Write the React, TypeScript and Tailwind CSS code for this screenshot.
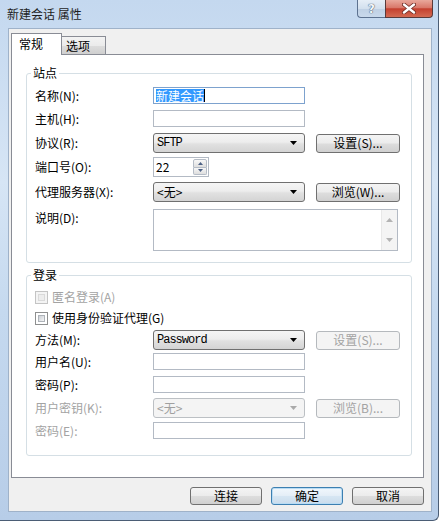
import React from 'react';

const DownArrow: React.FC<{ color?: string }> = ({ color = '#000' }) => (
  <svg width="7" height="4" viewBox="0 0 7 4" className="ml-auto shrink-0">
    <polygon points="0,0 7,0 3.5,4" fill={color} />
  </svg>
);

const TextBox: React.FC<{ focused?: boolean; children?: React.ReactNode }> = ({ focused, children }) => (
  <div
    className={`w-[152px] h-[17px] bg-white flex items-center pl-[2px] border ${
      focused ? 'border-[#7da2ce]' : 'border-[#b3bac4]'
    }`}
  >
    {children}
  </div>
);

const Combo: React.FC<{ value: string; mono?: boolean; disabled?: boolean }> = ({ value, mono, disabled }) => (
  <div
    className={`w-[152px] h-[20px] rounded-[3px] border flex items-center pl-[3px] pr-[7px] ${
      disabled
        ? 'border-[#bcc0c4] bg-[#f4f4f4] text-[#a0a0a0]'
        : 'border-[#707070] bg-[linear-gradient(#f5f5f5_0%,#ededed_45%,#e1e1e1_55%,#d4d4d4_100%)] text-black'
    }`}
  >
    <span className={mono ? "font-['Liberation_Mono',monospace] text-[12px] tracking-[-1px]" : ''}>{value}</span>
    <DownArrow color={disabled ? '#a9a9a9' : '#000'} />
  </div>
);

const Button: React.FC<{ children: React.ReactNode; disabled?: boolean; focused?: boolean; small?: boolean }> = ({
  children,
  disabled,
  focused,
  small,
}) => (
  <div
    className={`flex items-center justify-center rounded-[3px] border ${small ? 'w-[72px] h-[18px]' : 'w-[84px] h-[19px]'} ${
      disabled
        ? 'border-[#b5b9bd] bg-[#f4f4f4] text-[#a3a3a3]'
        : focused
          ? 'border-[#3c7fb1] bg-[linear-gradient(#f1f7fc_0%,#e4eef7_48%,#d6e6f3_52%,#cadcec_100%)] shadow-[inset_0_0_0_1px_#b9dcf4] text-black'
          : 'border-[#707070] bg-[linear-gradient(#f4f4f4_0%,#ececec_48%,#dddddd_52%,#d0d0d0_100%)] text-black'
    }`}
  >
    {children}
  </div>
);

const Row: React.FC<{ label: string; disabled?: boolean; className: string; children?: React.ReactNode }> = ({
  label,
  disabled,
  className,
  children,
}) => (
  <div className={`flex items-center ${className}`}>
    <div className={`w-[126px] shrink-0 pl-[8px] ${disabled ? 'text-[#a3a3a3]' : 'text-black'}`}>{label}</div>
    {children}
  </div>
);

const CheckBox: React.FC<{ disabled?: boolean }> = ({ disabled }) => (
  <div
    className={`w-[13px] h-[13px] border p-[2px] ${disabled ? 'border-[#c4c4c4] bg-[#f4f4f4]' : 'border-[#8e8f8f] bg-white'}`}
  >
    <div
      className={`w-full h-full border ${
        disabled
          ? 'border-[#dadada] bg-[#ededed]'
          : 'border-[#aeb3b9] bg-[linear-gradient(135deg,#cbcfd5_0%,#f6f6f6_100%)]'
      }`}
    />
  </div>
);

const SpinBox: React.FC = () => (
  <div className="w-[56px] h-[20px] border border-[#b3bac4] bg-white flex items-center pl-[2px]">
    <span className="text-black">22</span>
    <div className="ml-auto h-full w-[16px] flex flex-col p-[1px]">
      <div className="flex-1 border border-[#b5bcc6] rounded-t-[2px] bg-[linear-gradient(#f7f7f7,#dedede)] flex items-center justify-center">
        <svg width="5" height="3" viewBox="0 0 5 3">
          <polygon points="0,3 5,3 2.5,0" fill="#4d6185" />
        </svg>
      </div>
      <div className="flex-1 border border-t-0 border-[#b5bcc6] rounded-b-[2px] bg-[linear-gradient(#f7f7f7,#dedede)] flex items-center justify-center">
        <svg width="5" height="3" viewBox="0 0 5 3">
          <polygon points="0,0 5,0 2.5,3" fill="#4d6185" />
        </svg>
      </div>
    </div>
  </div>
);

const MemoBox: React.FC = () => (
  <div className="w-[245px] h-[42px] border border-[#b3bac4] bg-white flex">
    <div className="ml-auto w-[16px] h-full bg-[#f4f4f4] border-l border-[#e8e8e8] flex flex-col items-center justify-between py-[8px]">
      <svg width="7" height="4" viewBox="0 0 7 4">
        <polygon points="0,4 7,4 3.5,0" fill="#b3b3b3" />
      </svg>
      <svg width="7" height="4" viewBox="0 0 7 4">
        <polygon points="0,0 7,0 3.5,4" fill="#b3b3b3" />
      </svg>
    </div>
  </div>
);

const App: React.FC = () => {
  return (
    <div className="w-[441px] h-[522px] bg-white font-['Noto_Sans_CJK_SC','Noto_Sans',sans-serif] text-[12px] leading-[16px] text-black">
      <div className="w-[439px] h-[521px] rounded-br-[6px] border-r border-b border-[#4b5d75] bg-[linear-gradient(180deg,#c4d8ef_0%,#d6e5f5_35%,#c5d9ef_60%,#b7cde8_100%)] flex flex-col">
        {/* title bar */}
        <div className="h-[28px] flex items-start">
          <div className="pl-[7px] pt-[6px] text-[#1e1e1e]">新建会话 属性</div>
          <div className="ml-auto mr-[5px] flex">
            <div className="w-[28px] h-[18px] rounded-bl-[4px] border border-t-0 border-r-0 border-[#5d7290] bg-[linear-gradient(#e6eef7_0%,#d3e0ee_50%,#bfd0e4_52%,#c9d9ec_100%)] flex items-center justify-center">
              <span className="font-['DejaVu_Sans',sans-serif] font-bold text-[12px] leading-[12px] text-[#f4f7fb] [text-shadow:0_0_1px_#33475f,0_0_1px_#33475f]">
                ?
              </span>
            </div>
            <div className="w-[48px] h-[18px] rounded-br-[4px] border border-t-0 border-[#5a3a3a] bg-[linear-gradient(#e9a89c_0%,#d9786a_45%,#c4402f_52%,#d46a52_100%)] flex items-center justify-center">
              <svg width="14" height="11" viewBox="0 0 14 11">
                <path d="M2 1.5 L12 9.5 M12 1.5 L2 9.5" stroke="#6d2a22" strokeWidth="4" strokeLinecap="round" />
                <path d="M2 1.5 L12 9.5 M12 1.5 L2 9.5" stroke="#ffffff" strokeWidth="2.4" strokeLinecap="round" />
              </svg>
            </div>
          </div>
        </div>

        {/* client area */}
        <div className="ml-[8px] w-[424px] h-[484px] border border-[#9fb2c9] bg-[#f0f0f0] flex flex-col">
          {/* tabs */}
          <div className="mt-[4px] ml-[2px] h-[22px] flex items-end">
            <div className="relative z-10 w-[51px] h-[22px] bg-white border border-b-0 border-[#898c95] flex items-center pl-[7px] pb-[2px]">
              常规
            </div>
            <div className="w-[44px] h-[18px] mb-[1px] border border-l-0 border-b-0 border-[#898c95] bg-[linear-gradient(#f3f3f3_0%,#ebebeb_50%,#dddddd_51%,#cfcfcf_100%)] flex items-center pl-[4px]">
              选项
            </div>
          </div>

          {/* tab page */}
          <div className="-mt-[1px] ml-[2px] w-[413px] h-[424px] border border-[#898c95] bg-white flex flex-col">
            <fieldset className="mt-[10px] ml-[14px] w-[386px] border border-[#d5dfe5] rounded-[3px] pb-[11px]">
              <legend className="ml-[4px] px-[2px] leading-[16px]">站点</legend>
              <Row label="名称(N):" className="mt-[6px] h-[17px]">
                <TextBox focused>
                  <span className="bg-[#3399ff] text-white leading-[13px]">新建会话</span>
                  <span className="w-[1px] h-[13px] bg-black" />
                </TextBox>
              </Row>
              <Row label="主机(H):" className="mt-[6px] h-[17px]">
                <TextBox />
              </Row>
              <Row label="协议(R):" className="mt-[6px] h-[20px]">
                <Combo value="SFTP" mono />
                <div className="ml-[11px]">
                  <Button>设置(S)...</Button>
                </div>
              </Row>
              <Row label="端口号(O):" className="mt-[4px] h-[20px]">
                <SpinBox />
              </Row>
              <Row label="代理服务器(X):" className="mt-[5px] h-[20px]">
                <Combo value="<无>" />
                <div className="ml-[11px]">
                  <Button>浏览(W)...</Button>
                </div>
              </Row>
              <div className="mt-[7px] h-[42px] flex items-start">
                <div className="w-[126px] shrink-0 pl-[8px] pt-[1px]">说明(D):</div>
                <MemoBox />
              </div>
            </fieldset>

            <fieldset className="mt-[4px] ml-[14px] w-[386px] border border-[#d5dfe5] rounded-[3px] pb-[16px]">
              <legend className="ml-[4px] px-[2px] leading-[16px]">登录</legend>
              <div className="mt-[7px] h-[14px] pl-[8px] flex items-center">
                <CheckBox disabled />
                <span className="ml-[4px] text-[#a3a3a3]">匿名登录(A)</span>
              </div>
              <div className="mt-[7px] h-[14px] pl-[8px] flex items-center">
                <CheckBox />
                <span className="ml-[4px]">使用身份验证代理(G)</span>
              </div>
              <Row label="方法(M):" className="mt-[5px] h-[20px]">
                <Combo value="Password" mono />
                <div className="ml-[11px]">
                  <Button disabled>设置(S)...</Button>
                </div>
              </Row>
              <Row label="用户名(U):" className="mt-[3px] h-[17px]">
                <TextBox />
              </Row>
              <Row label="密码(P):" className="mt-[6px] h-[17px]">
                <TextBox />
              </Row>
              <Row label="用户密钥(K):" disabled className="mt-[5px] h-[20px]">
                <Combo value="<无>" disabled />
                <div className="ml-[11px]">
                  <Button disabled>浏览(B)...</Button>
                </div>
              </Row>
              <Row label="密码(E):" disabled className="mt-[4px] h-[17px]">
                <TextBox />
              </Row>
            </fieldset>
          </div>

          {/* dialog buttons */}
          <div className="mt-[9px] pr-[7px] flex justify-end gap-[9px]">
            <Button small>连接</Button>
            <Button small focused>
              确定
            </Button>
            <Button small>取消</Button>
          </div>
        </div>
      </div>
    </div>
  );
};

export default App;
